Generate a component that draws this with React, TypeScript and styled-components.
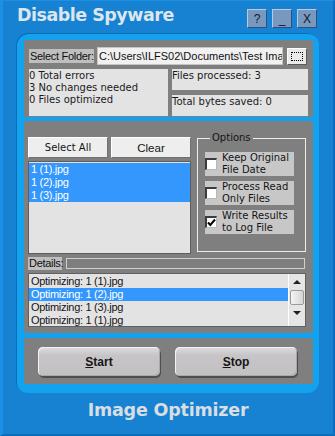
import React from 'react';
import styled, { createGlobalStyle } from 'styled-components';

const Global = createGlobalStyle`
  html, body { margin: 0; padding: 0; background: #1781d2; }
  body { width: 335px; height: 436px; overflow: hidden; }
  * { box-sizing: border-box; }
`;

const Window = styled.div`
  width: 335px;
  height: 436px;
  background: #1781d2;
  border-left: 3px solid #1c90e4;
  border-top: 1px solid #1c90e4;
  border-right: 2px solid #0e6cbc;
  border-bottom: 2px solid #0e6cbc;
  display: flex;
  flex-direction: column;
  font-family: "DejaVu Sans", Verdana, sans-serif;
`;

const TitleBar = styled.div`
  height: 32px;
  display: flex;
  justify-content: space-between;
  align-items: flex-start;
  padding: 0 16px 0 14px;
`;

const Title = styled.div`
  margin-top: 3px;
  font-size: 17.5px;
  line-height: 22px;
  font-weight: bold;
  letter-spacing: -0.5px;
  color: #dde6ee;
`;

const TitleButtons = styled.div`
  margin-top: 8px;
  display: flex;
  gap: 5px;
`;

const TitleButton = styled.div`
  width: 20px;
  height: 19px;
  background: #7898c0;
  border: 1px solid;
  border-color: #b4cbe6 #2e507c #2e507c #b4cbe6;
  display: flex;
  align-items: center;
  justify-content: center;
  font-family: "Liberation Sans", Arial, sans-serif;
  font-size: 12px;
  color: #101828;
`;

const Frame = styled.div`
  margin: 0 14px 0 13px;
  height: 360px;
  border-radius: 12px;
  background: #12a2ee;
  box-shadow: inset 1px 1px 0 #0c6bb6;
  padding: 7px 6px 9px 8px;
  display: flex;
  flex-direction: column;
`;

const Panel = styled.div<{ $h: number; $gapTop?: number }>`
  background: #807f80;
  height: ${p => p.$h}px;
  margin-top: ${p => p.$gapTop ?? 0}px;
  border-radius: 2px;
`;

const TopPanel = styled(Panel)`
  padding: 7px 5px 1px 5px;
  display: flex;
  flex-direction: column;
  gap: 4px;
`;

const FolderRow = styled.div`
  height: 18px;
  display: flex;
  align-items: center;
`;

const GrayLabel = styled.div<{ $w: number; $h: number }>`
  width: ${p => p.$w}px;
  height: ${p => p.$h}px;
  flex: none;
  background: #c0bfc0;
  font-family: "Liberation Sans", Arial, sans-serif;
  font-size: 11px;
  letter-spacing: -0.3px;
  line-height: ${p => p.$h}px;
  color: #101010;
  padding-left: 1px;
  white-space: nowrap;
`;

const PathBox = styled.div`
  margin-left: 3px;
  width: 186px;
  height: 18px;
  background: #f2f1f2;
  border: 1px solid #c4c4c4;
  font-family: "Liberation Sans", Arial, sans-serif;
  font-size: 11px;
  line-height: 16px;
  color: #101010;
  padding-left: 1px;
  white-space: nowrap;
  overflow: hidden;
`;

const BrowseButton = styled.div`
  margin-left: 4px;
  width: 20px;
  height: 17px;
  background: #ebeaeb;
  border: 1px solid;
  border-color: #ffffff #5c5c5c #5c5c5c #ffffff;
  display: flex;
  align-items: center;
  justify-content: center;
`;

const DottedRect = styled.div`
  width: 12px;
  height: 9px;
  border: 1px dotted #000;
`;

const StatsRow = styled.div`
  height: 47px;
  display: flex;
  gap: 4px;
`;

const InfoBox = styled.div<{ $w?: number; $h?: number }>`
  background: #e4e3e4;
  width: ${p => (p.$w ? `${p.$w}px` : 'auto')};
  height: ${p => (p.$h ? `${p.$h}px` : 'auto')};
  flex: ${p => (p.$w ? 'none' : '1')};
  font-size: 10px;
  line-height: 12px;
  color: #1a1a1a;
  padding-top: 1px;
  white-space: nowrap;
`;

const InfoColumn = styled.div`
  flex: 1;
  display: flex;
  flex-direction: column;
  gap: 5px;
`;

const MidPanel = styled(Panel)`
  padding: 11px 7px 6px 4px;
  display: flex;
  flex-direction: column;
`;

const UpperArea = styled.div`
  display: flex;
  gap: 6px;
  height: 122px;
`;

const LeftColumn = styled.div`
  padding-top: 5px;
  width: 163px;
  display: flex;
  flex-direction: column;
  gap: 3px;
`;

const ButtonRow = styled.div`
  display: flex;
  gap: 3px;
  height: 21px;
`;

const FlatButton = styled.div<{ $w: number; $serif?: boolean }>`
  width: ${p => p.$w}px;
  height: 21px;
  background: #efeeef;
  border: 1px solid;
  border-color: #ffffff #707070 #707070 #ffffff;
  display: flex;
  align-items: center;
  justify-content: center;
  font-family: ${p => (p.$serif ? '"Liberation Sans", Arial, sans-serif' : '"DejaVu Sans", Verdana, sans-serif')};
  font-size: ${p => (p.$serif ? '11.5px' : '10px')};
  color: #141414;
`;

const ListBox = styled.div<{ $h: number }>`
  height: ${p => p.$h}px;
  background: #e4e3e4;
  border: 1px solid #5e5e5e;
  padding-top: 1px;
  display: flex;
  overflow: hidden;
`;

const ListItems = styled.div`
  flex: 1;
  display: flex;
  flex-direction: column;
`;

const ListItem = styled.div<{ $sel?: boolean }>`
  height: 13px;
  line-height: 13px;
  padding-left: 2px;
  background: ${p => (p.$sel ? '#3397fd' : 'transparent')};
  color: ${p => (p.$sel ? '#ffffff' : '#141414')};
  font-family: "Liberation Sans", Arial, sans-serif;
  font-size: 11px;
  letter-spacing: -0.3px;
  white-space: nowrap;
`;

const OptionsBox = styled.fieldset`
  margin: 0;
  width: 109px;
  height: 120px;
  border: 1px solid #ececec;
  padding: 8px 0 0 7px;
  display: flex;
  flex-direction: column;
  gap: 5px;
`;

const Legend = styled.legend`
  margin-left: 5px;
  padding: 0 2px;
  font-size: 10px;
  line-height: 12px;
  color: #141414;
`;

const OptionRow = styled.div`
  width: 89px;
  height: 24px;
  background: #c8c7c8;
  display: flex;
  align-items: center;
  gap: 5px;
`;

const CheckBox = styled.div`
  width: 12px;
  height: 12px;
  flex: none;
  background: #ffffff;
  border-top: 2px solid #3c3c3c;
  border-left: 2px solid #3c3c3c;
  border-right: 1px solid #b8b8b8;
  border-bottom: 1px solid #b8b8b8;
  display: flex;
  align-items: center;
  justify-content: center;
`;

const OptionText = styled.div`
  font-size: 10px;
  line-height: 12px;
  color: #141414;
  white-space: nowrap;
`;

const DetailsRow = styled.div`
  margin-top: 3px;
  height: 13px;
  display: flex;
  align-items: center;
  gap: 4px;
`;

const Progress = styled.div`
  width: 239px;
  height: 11px;
  background: #7f7e7f;
  border: 1px solid #cfcfcf;
`;

const DetailsList = styled(ListBox)`
  margin-top: 3px;
  width: 278px;
  border-color: #606060;
`;

const ScrollBar = styled.div`
  width: 17px;
  flex: none;
  margin-top: -1px;
  background: #e6e5e6;
  border-left: 1px solid #ffffff;
  display: flex;
  flex-direction: column;
  align-items: center;
  padding-top: 6px;
`;

const Arrow = styled.div<{ $down?: boolean }>`
  width: 0;
  height: 0;
  border-left: 4px solid transparent;
  border-right: 4px solid transparent;
  ${p => (p.$down ? 'border-top: 4px solid #202020;' : 'border-bottom: 4px solid #202020;')}
`;

const Thumb = styled.div`
  margin: 6px 0 6px;
  width: 14px;
  height: 15px;
  border-radius: 2px;
  background: linear-gradient(90deg, #f4f4f4, #d6d6d6);
  border: 1px solid #9a9a9a;
`;

const BottomPanel = styled(Panel)`
  padding: 9px 16px 0 14px;
  display: flex;
  gap: 15px;
`;

const BigButton = styled.div`
  width: 122px;
  height: 29px;
  border-radius: 5px;
  background: linear-gradient(180deg, #dedcde 0%, #c6c4c6 30%, #c3c1c3 100%);
  box-shadow: inset 1px 1px 0 #f2f2f2, inset -1px -1px 0 #a8a8a8, 1px 2px 0 #4e4e4e;
  display: flex;
  align-items: center;
  justify-content: center;
  font-family: "Liberation Sans", Arial, sans-serif;
  font-weight: bold;
  font-size: 12px;
  color: #151515;
`;

const Footer = styled.div`
  flex: 1;
  display: flex;
  align-items: center;
  justify-content: center;
  padding-bottom: 8px;
  font-size: 17.5px;
  font-weight: bold;
  letter-spacing: -0.2px;
  color: #d9dee3;
`;

const Check = () => (
  <svg width="9" height="9" viewBox="0 0 9 9">
    <path d="M1 4.5 L3.3 7 L8 1.5" fill="none" stroke="#000" strokeWidth="2" />
  </svg>
);

const options = [
  { label: ['Keep Original', 'File Date'], checked: false },
  { label: ['Process Read', 'Only Files'], checked: false },
  { label: ['Write Results', 'to Log File'], checked: true },
];

const files = ['1 (1).jpg', '1 (2).jpg', '1 (3).jpg'];
const details = ['Optimizing: 1 (1).jpg', 'Optimizing: 1 (2).jpg', 'Optimizing: 1 (3).jpg', 'Optimizing: 1 (1).jpg'];

export default function App() {
  return (
    <>
      <Global />
      <Window>
        <TitleBar>
          <Title>Disable Spyware</Title>
          <TitleButtons>
            <TitleButton>?</TitleButton>
            <TitleButton>_</TitleButton>
            <TitleButton>X</TitleButton>
          </TitleButtons>
        </TitleBar>
        <Frame>
          <TopPanel $h={77}>
            <FolderRow>
              <GrayLabel $w={65} $h={14}>Select Folder:</GrayLabel>
              <PathBox>C:\Users\ILFS02\Documents\Test Ima</PathBox>
              <BrowseButton>
                <DottedRect />
              </BrowseButton>
            </FolderRow>
            <StatsRow>
              <InfoBox $w={139}>
                <div>0 Total errors</div>
                <div>3 No changes needed</div>
                <div>0 Files optimized</div>
              </InfoBox>
              <InfoColumn>
                <InfoBox $h={21}>Files processed: 3</InfoBox>
                <InfoBox $h={21}>Total bytes saved: 0</InfoBox>
              </InfoColumn>
            </StatsRow>
          </TopPanel>
          <MidPanel $h={212} $gapTop={4}>
            <UpperArea>
              <LeftColumn>
                <ButtonRow>
                  <FlatButton $w={80}>Select All</FlatButton>
                  <FlatButton $w={80} $serif>Clear</FlatButton>
                </ButtonRow>
                <ListBox $h={93}>
                  <ListItems>
                    {files.map(f => (
                      <ListItem key={f} $sel>{f}</ListItem>
                    ))}
                  </ListItems>
                </ListBox>
              </LeftColumn>
              <OptionsBox>
                <Legend>Options</Legend>
                {options.map(o => (
                  <OptionRow key={o.label[0]}>
                    <CheckBox>{o.checked && <Check />}</CheckBox>
                    <OptionText>
                      {o.label[0]}
                      <br />
                      {o.label[1]}
                    </OptionText>
                  </OptionRow>
                ))}
              </OptionsBox>
            </UpperArea>
            <DetailsRow>
              <GrayLabel $w={34} $h={13}>Details:</GrayLabel>
              <Progress />
            </DetailsRow>
            <DetailsList $h={54}>
              <ListItems>
                {details.map((d, i) => (
                  <ListItem key={i} $sel={i === 1}>{d}</ListItem>
                ))}
              </ListItems>
              <ScrollBar>
                <Arrow />
                <Thumb />
                <Arrow $down />
              </ScrollBar>
            </DetailsList>
          </MidPanel>
          <BottomPanel $h={46} $gapTop={5}>
            <BigButton><u>S</u>tart</BigButton>
            <BigButton><u>S</u>top</BigButton>
          </BottomPanel>
        </Frame>
        <Footer>Image Optimizer</Footer>
      </Window>
    </>
  );
}
